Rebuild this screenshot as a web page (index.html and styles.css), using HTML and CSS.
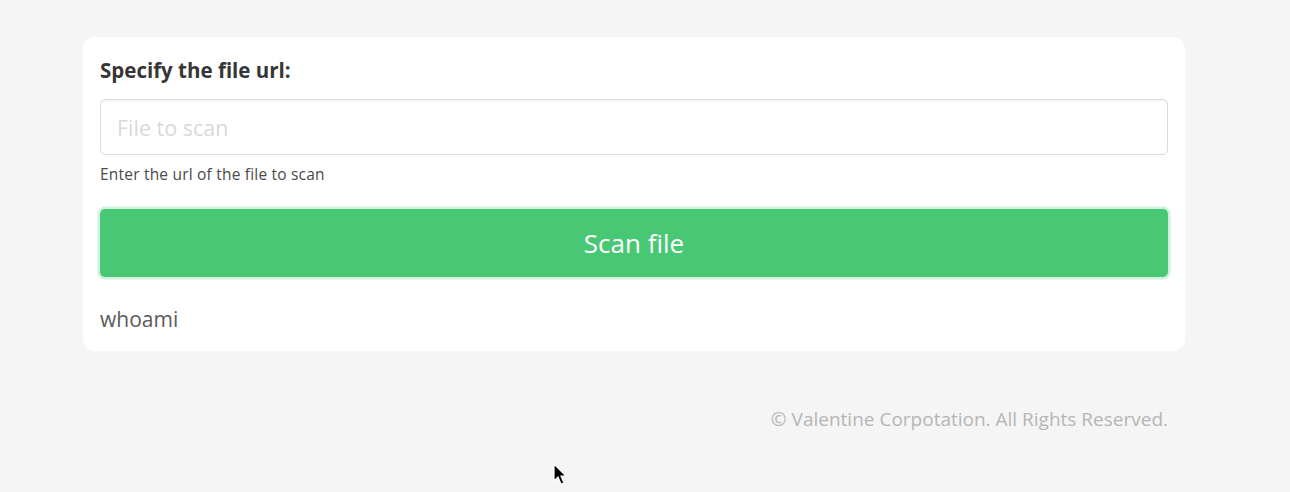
FILE: index.html
```html
<!DOCTYPE html>
<html>
<head>
<meta charset="utf-8">
<link rel="stylesheet" href="styles.css">
</head>
<body>
<main class="page">
  <section class="card">
    <label class="label" for="file">Specify the file url:</label>
    <input class="input" id="file" type="text" placeholder="File to scan">
    <p class="help">Enter the url of the file to scan</p>
    <button class="button">Scan file</button>
    <p class="result">whoami</p>
  </section>
  <footer class="footer">© Valentine Corpotation. All Rights Reserved.</footer>
</main>
<svg class="cursor" width="16" height="24" viewBox="0 0 16 24"><path d="M1 1 L1 18 L5 14 L8 21 L11 20 L8 13 L13 13 Z" fill="#000" stroke="#fff" stroke-width="1.2"/></svg>
</body>
</html>
```
FILE: styles.css
```css
html, body { margin: 0; padding: 0; }
body {
  background: #f5f5f5;
  font-family: "Open Sans", "Noto Sans", sans-serif;
  color: #4a4a4a;
  width: 1290px;
  height: 492px;
  overflow: hidden;
  position: relative;
}
.page {
  padding: 37px 105px 0 83px;
  display: flex;
  flex-direction: column;
}
.card {
  background: #fff;
  border-radius: 12px;
  padding: 20px 17px 18px 17px;
  display: flex;
  flex-direction: column;
}
.label {
  font-weight: 700;
  font-size: 20.5px;
  line-height: 26px;
  color: #363636;
  letter-spacing: 0px;
}
.input {
  margin-top: 16px;
  height: 56px;
  box-sizing: border-box;
  border: 1px solid #dbdbdb;
  border-radius: 5px;
  padding: 0 16px;
  font-family: inherit;
  font-size: 21.5px;
  color: #363636;
  outline: none;
  box-shadow: inset 0 1px 2px rgba(10,10,10,0.05);
}
.input::placeholder { color: #d9d9d9; }
.help {
  margin: 9px 0 0 0;
  font-size: 15.5px;
  line-height: 20px;
  color: #4a4a4a;
  letter-spacing: 0.2px;
}
.button {
  margin-top: 25px;
  height: 68px;
  background: #48c774;
  border: none;
  border-radius: 5px;
  color: #fff;
  font-family: inherit;
  font-size: 26px;
  box-shadow: 0 0 0 2.5px rgba(72,199,116,0.25);
}
.result {
  margin: 28px 0 0 0;
  font-size: 21px;
  line-height: 28px;
  color: #5a5a5a;
}
.footer {
  margin-top: 56px;
  text-align: right;
  padding-right: 17px;
  font-size: 19px;
  line-height: 24px;
  color: #b5b5b5;
}
.cursor {
  position: absolute;
  left: 553px;
  top: 463px;
}
```
